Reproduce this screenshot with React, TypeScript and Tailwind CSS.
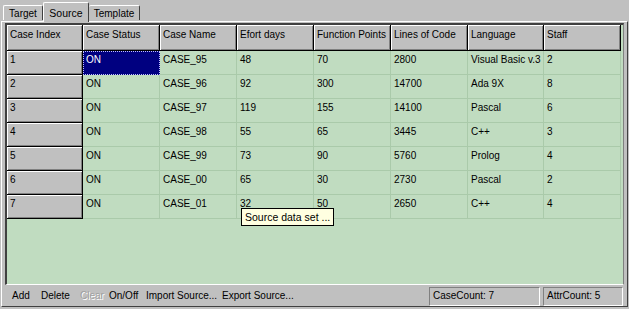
import React from "react";

const rows = [
  ["1", "ON", "CASE_95", "48", "70", "2800", "Visual Basic v.3", "2"],
  ["2", "ON", "CASE_96", "92", "300", "14700", "Ada 9X", "8"],
  ["3", "ON", "CASE_97", "119", "155", "14100", "Pascal", "6"],
  ["4", "ON", "CASE_98", "55", "65", "3445", "C++", "3"],
  ["5", "ON", "CASE_99", "73", "90", "5760", "Prolog", "4"],
  ["6", "ON", "CASE_00", "65", "30", "2730", "Pascal", "2"],
  ["7", "ON", "CASE_01", "32", "50", "2650", "C++", "4"],
];

const headers = [
  "Case Index",
  "Case Status",
  "Case Name",
  "Efort days",
  "Function Points",
  "Lines of Code",
  "Language",
  "Staff",
];

const gridCols = "grid grid-cols-[76px_77px_77px_77px_77px_77px_76px_77px]";

const raised =
  "bg-[#c0c0c0] border-r border-b border-[#000] shadow-[inset_1px_1px_0_#fff,inset_-1px_-1px_0_#808080]";

export default function App() {
  return (
    <div
      className="relative w-[629px] h-[309px] bg-[#c0c0c0] overflow-hidden text-[10px] text-black leading-none"
      style={{ fontFamily: '"Liberation Sans", Arial, sans-serif' }}
    >
      {/* Tabs */}
      <div className="flex items-end h-[21px] pl-[3px]">
        <div className="h-[15px] w-[40px] mb-px border-t border-l border-white border-r border-r-[#404040] rounded-t-[2px] flex items-center justify-center pt-[2px]">
          Target
        </div>
        <div className="relative z-10 h-[20px] w-[46px] -mb-px bg-[#c0c0c0] border-t border-l border-white border-r border-r-[#404040] rounded-t-[2px] flex items-start justify-center pt-[5px] text-[10.5px]">
          Source
        </div>
        <div className="h-[15px] w-[51px] mb-px border-t border-white border-r border-r-[#404040] rounded-t-[2px] flex items-center justify-center pt-[2px]">
          Template
        </div>
      </div>

      {/* Panel */}
      <div className="ml-[1px] w-[627px] h-[286px] border-t border-l border-white border-r border-r-[#404040] border-b border-b-[#404040] flex flex-col">
        {/* Grid box */}
        <div className="mt-[1px] ml-[3px] w-[619px] h-[262px] border-t-2 border-l-2 border-[#404040] border-r border-r-[#808080] border-b border-b-white bg-[#c0dcc0] flex flex-col">
          <div className={`${gridCols} h-[26px]`}>
            {headers.map((h) => (
              <div key={h} className={`${raised} pl-[3px] pt-[5px] whitespace-nowrap`}>
                {h}
              </div>
            ))}
          </div>
          {rows.map((r, ri) => (
            <div key={ri} className={`${gridCols} h-[24px]`}>
              {r.map((c, ci) => {
                if (ci === 0)
                  return (
                    <div key={ci} className={`${raised} pl-[3px] pt-[4px]`}>
                      {c}
                    </div>
                  );
                if (ri === 0 && ci === 1)
                  return (
                    <div
                      key={ci}
                      className="bg-[#000080] text-white pl-[2px] pt-[3px] border border-dotted border-[#c0c0ff]"
                    >
                      {c}
                    </div>
                  );
                return (
                  <div
                    key={ci}
                    className="border-r border-b border-[#aacaaa] pl-[3px] pt-[4px] whitespace-nowrap"
                  >
                    {c}
                  </div>
                );
              })}
            </div>
          ))}
          <div className="flex-1" />
        </div>

        {/* Toolbar */}
        <div className="flex items-center h-[20px] mt-[1px] ml-[3px] w-[619px]">
          <div className="flex items-center pl-[7px] flex-1 whitespace-nowrap">
            <span className="w-[29px]">Add</span>
            <span className="w-[39px]">Delete</span>
            <span className="w-[29px] text-[#a0a0a0] [text-shadow:1px_1px_0_#fff]">Clear</span>
            <span className="w-[37px]">On/Off</span>
            <span className="w-[76px]">Import Source...</span>
            <span>Export Source...</span>
          </div>
          <div className="h-[19px] w-[111px] border-t border-l border-[#808080] border-r border-b border-r-white border-b-white pl-[3px] flex items-center">
            CaseCount: 7
          </div>
          <div className="ml-[3px] mr-[1px] h-[19px] w-[80px] border-t border-l border-[#808080] border-r border-b border-r-white border-b-white pl-[3px] flex items-center">
            AttrCount: 5
          </div>
        </div>
      </div>

      {/* Tooltip */}
      <div className="absolute left-[241px] top-[208px] h-[18px] bg-[#ffffe1] border border-black px-[3px] flex items-center whitespace-nowrap text-[10.5px]">
        Source data set ...
      </div>
    </div>
  );
}
